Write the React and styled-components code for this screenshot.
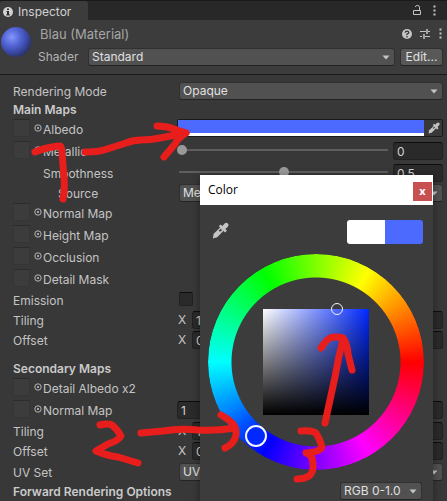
import React from "react";
import styled, { createGlobalStyle, css } from "styled-components";

const GlobalStyle = createGlobalStyle`
  *, *::before, *::after { box-sizing: border-box; }
  body {
    margin: 0;
    background: #383838;
    overflow: hidden;
  }
  body, button, input, select {
    font-family: Inter, "Liberation Sans", sans-serif;
    font-size: 12px;
    line-height: 16px;
    color: #c4c4c4;
  }
`;

const Window = styled.div`
  position: relative;
  min-height: 100vh;
  overflow: hidden;
  background: #383838;
`;

const TabBar = styled.nav`
  display: flex;
  align-items: stretch;
  justify-content: space-between;
  height: 20px;
  background: #282828;
  border-top: 1px solid #1a1a1a;
`;

const Tab = styled.button`
  display: flex;
  align-items: center;
  gap: 5px;
  padding: 2px 17px 0 3px;
  border: 0;
  border-radius: 3px 3px 0 0;
  background: #3c3c3c;
  color: #d2d2d2;
`;

const Tools = styled.div`
  display: flex;
  align-items: center;
  gap: 8px;
  padding-right: 1px;
`;

const TabTools = styled(Tools)`
  gap: 11px;
  padding: 0 11px 1px 0;
`;

const IconButton = styled.button`
  display: flex;
  flex: none;
  align-items: center;
  justify-content: center;
  padding: 0;
  border: 0;
  background: none;
  color: #c4c4c4;
`;

const Header = styled.header`
  display: flex;
  gap: 7px;
  height: 55px;
  background: #3c3c3c;
  border-bottom: 1px solid #1a1a1a;
  padding: 4px 4px 0 1px;
`;

const Preview = styled.div`
  flex: none;
  width: 30px;
  height: 30px;
  margin-top: 3px;
  border-radius: 50%;
  background: radial-gradient(circle at 36% 34%, #8799ff 0, #7083ee 12%, #5062d2 34%, #3a48a2 56%, #252d5c 80%, #20253f 100%);
`;

const HeaderMain = styled.div`
  flex: 1;
  min-width: 0;
`;

const TitleRow = styled.div`
  display: flex;
  align-items: center;
  justify-content: space-between;
  height: 19px;
  padding-left: 2px;
`;

const Title = styled.h1`
  margin: 0;
  font-size: 13px;
  font-weight: 400;
  color: #a6a6a6;
`;

const ShaderRow = styled.div`
  display: flex;
  align-items: center;
  gap: 5px;
  margin-top: 5px;
  height: 18px;
`;

const ShaderLabel = styled.label`
  width: 45px;
  color: #b4b4b4;
`;

const SelectBox = styled.span`
  position: relative;
  display: flex;
  flex: ${(p) => (p.$width ? "none" : 1)};
  width: ${(p) => (p.$width ? `${p.$width}px` : "auto")};
  min-width: 0;
  margin-left: ${(p) => p.$inset || 0}px;
  color: #c4c4c4;

  svg {
    position: absolute;
    right: 5px;
    top: 7px;
    pointer-events: none;
  }
`;

const raised = css`
  height: 18px;
  border: 1px solid #303030;
  border-bottom-color: #242424;
  border-radius: 3px;
  color: #e0e0e0;
`;

const Select = styled.select`
  ${raised}
  appearance: none;
  width: 100%;
  padding: 0 16px 0 3px;
  background: #515151;
`;

const EditButton = styled.button`
  ${raised}
  width: 43px;
  padding: 0;
  background: #585858;
`;

const Body = styled.main`
  padding: 6px 4px 0 13px;
`;

const Row = styled.div`
  display: flex;
  align-items: center;
  height: ${(p) => p.$height || 20}px;
`;

const LabelCell = styled.div`
  display: flex;
  flex: none;
  align-items: center;
  width: 164px;
  padding-left: ${(p) => p.$indent || 0}px;
`;

const Label = styled.label`
  white-space: nowrap;
  padding-top: 1px;
`;

const SectionTitle = styled.h2`
  margin: ${(p) => (p.$spaced ? "10px 0 0" : "0")};
  height: 17px;
  font-size: 12px;
  line-height: 17px;
  font-weight: 600;
  color: #cacaca;
`;

const Slot = styled.button`
  width: 17px;
  height: 18px;
  margin: 0 3px 2px 0;
  padding: 0;
  border: 1px solid #353535;
  border-top-color: #2c2c2c;
  background: #3c3c3c;
`;

const PickerButton = styled(IconButton)`
  width: 10px;
  margin-bottom: 2px;
`;

const Value = styled.div`
  display: flex;
  flex: 1;
  align-items: center;
  min-width: 0;
`;

const TextInput = styled.input`
  flex: ${(p) => (p.$width ? "none" : 1)};
  width: ${(p) => (p.$width ? `${p.$width}px` : "auto")};
  min-width: 0;
  height: 18px;
  padding: 0 3px;
  border: 1px solid #212121;
  border-top-color: #0d0d0d;
  border-radius: 3px;
  background: #2a2a2a;
  color: #d2d2d2;
`;

const Axis = styled.label`
  width: 15px;
  padding-left: 1px;
`;

const Slider = styled.input`
  appearance: none;
  flex: 1;
  min-width: 0;
  height: 10px;
  margin: 0 3px 2px 0;
  background: linear-gradient(#5e5e5e, #5e5e5e) 2px center / calc(100% - 4px) 2px no-repeat;

  &::-webkit-slider-thumb {
    appearance: none;
    width: 10px;
    height: 10px;
    border-radius: 50%;
    background: #999999;
  }
`;

const Checkbox = styled.input`
  appearance: none;
  width: 14px;
  height: 14px;
  margin: 0 0 2px 2px;
  border: 1px solid #212121;
  border-top-color: #0d0d0d;
  border-radius: 2px;
  background: #2a2a2a;
`;

const ColorField = styled.div`
  display: flex;
  flex: 1;
  align-items: center;
  gap: 4px;
  height: 18px;
  margin-bottom: 2px;
  padding-right: 2px;
  border: 1px solid #1a1a1a;
  border-radius: 2px;
`;

const ColorBar = styled.button`
  flex: 1;
  height: 16px;
  padding: 0;
  border: 0;
  border-bottom: 3px solid #ffffff;
  background: #4d6aff;
`;

const Dialog = styled.section`
  position: absolute;
  top: 175px;
  right: 14px;
  width: 233px;
  height: 340px;
  background: #3c3c3c;
  box-shadow: 0 2px 7px 1px rgba(0, 0, 0, 0.32);
`;

const DialogTitle = styled.header`
  display: flex;
  align-items: center;
  justify-content: space-between;
  height: 30px;
  padding: 0 1px 0 8px;
  background: #ffffff;
  color: #000000;
  font-family: "Open Sans", "Noto Sans", sans-serif;
`;

const CloseButton = styled.button`
  width: 19px;
  height: 19px;
  margin-top: 3px;
  padding: 0 0 2px;
  border: 0;
  background: #c75050;
  color: #ffffff;
  font-family: "Open Sans", "Noto Sans", sans-serif;
  font-size: 11px;
  font-weight: 700;
  line-height: 16px;
`;

const PickTools = styled.div`
  display: flex;
  justify-content: space-between;
  align-items: flex-start;
  padding: 15px 10px 0 12px;
`;

const DropperButton = styled(IconButton)`
  padding-top: 2px;
`;

const Swatches = styled.div`
  display: flex;
  width: 76px;
  height: 24px;
  border-radius: 3px;
  overflow: hidden;
`;

const Swatch = styled.button`
  flex: 1;
  padding: 0;
  border: 0;
  background: ${(p) => p.$color};
`;

const Wheel = styled.div`
  position: relative;
  display: grid;
  place-items: center;
  width: 216px;
  height: 216px;
  margin: 10px 0 0 8px;
`;

const HueRing = styled.div`
  grid-area: 1 / 1;
  width: 100%;
  height: 100%;
  border-radius: 50%;
  background: conic-gradient(from 90deg, #ff0000, #ff00ff, #0000ff, #00ffff, #00ff00, #ffff00, #ff0000);
  mask: radial-gradient(circle, transparent 84px, #000 85px);
`;

const Shades = styled.div`
  grid-area: 1 / 1;
  width: 106px;
  height: 106px;
  background:
    linear-gradient(to bottom, rgba(0, 0, 0, 0), #000000),
    linear-gradient(to right, #ffffff, #0028ff);
`;

const Handle = styled.span`
  position: absolute;
  left: ${(p) => p.$x}px;
  top: ${(p) => p.$y}px;
  width: ${(p) => p.$size}px;
  height: ${(p) => p.$size}px;
  transform: translate(-50%, -50%);
  border: ${(p) => p.$line}px solid #f4f4ff;
  border-radius: 50%;
  background: ${(p) => p.$fill || "transparent"};
`;

const ModeRow = styled.div`
  display: flex;
  justify-content: flex-end;
  padding: 12px 11px 0 0;
`;

const Ink = styled.svg`
  position: absolute;
  top: 0;
  left: 0;
  pointer-events: none;
`;

const Arrow = () => (
  <svg width="8" height="5" viewBox="0 0 8 5" aria-hidden="true">
    <path d="M0.5 0.5h7L4 4.5z" fill="currentColor" />
  </svg>
);

const InfoIcon = () => (
  <svg width="10" height="10" viewBox="0 0 10 10" aria-hidden="true">
    <circle cx="5" cy="5" r="5" fill="#d2d2d2" />
    <path d="M4 1.5h2v1.6H4zM3.5 4H6v3.2h.8v1.2H3.3V7.2H4V5.1h-.5z" fill="#303030" />
  </svg>
);

const LockIcon = () => (
  <svg width="10" height="12" viewBox="0 0 10 12" fill="none" stroke="currentColor" aria-hidden="true">
    <path d="M1.5 6.5h7v4h-7zM7.5 6V3.2Q7.5 1.5 5.5 1.5T3.2 3" />
  </svg>
);

const DotsIcon = () => (
  <svg width="3" height="11" viewBox="0 0 3 11" fill="currentColor" aria-hidden="true">
    <path d="M0.5 0.5h2v2h-2zM0.5 4.5h2v2h-2zM0.5 8.5h2v2h-2z" />
  </svg>
);

const HelpIcon = () => (
  <svg width="10" height="10" viewBox="0 0 10 10" aria-hidden="true">
    <circle cx="5" cy="5" r="5" fill="currentColor" />
    <path d="M3.2 3.6Q3.4 2.2 5 2.2t1.8 1.4Q6.8 4.6 5 5v1.2M5 7v1.4" fill="none" stroke="#303030" strokeWidth="1.2" />
  </svg>
);

const PresetIcon = () => (
  <svg width="11" height="10" viewBox="0 0 11 10" fill="none" stroke="currentColor" aria-hidden="true">
    <path d="M0 2.5h6M8 2.5h2M0 7.5h2M5 7.5h5" />
    <path d="M7 0v5M4 5v5" strokeWidth="1.5" />
  </svg>
);

const TargetIcon = () => (
  <svg width="8" height="8" viewBox="0 0 8 8" aria-hidden="true">
    <circle cx="4" cy="4" r="3.2" fill="none" stroke="currentColor" strokeWidth="0.9" />
    <circle cx="4" cy="4" r="1" fill="currentColor" />
  </svg>
);

const Dropper = ({ size }) => (
  <svg width={size} height={size} viewBox="0 0 17 17" aria-hidden="true">
    <path d="M8.4 5.2l3.4 3.4-6.6 6.6-4.4 1.2.9-4.6z" fill="currentColor" />
    <path d="M8.6 6.8l1.5 1.5-2.3 1.4-1-1z" fill="#3c3c3c" />
    <path d="M6.8 4.2l1.8-1.8 1.8 1.5L12.6 1.5q1.7-1.4 3.2 0t0 3.2l-2.4 2.2 1.5 1.8-1.8 1.8z" fill="currentColor" />
  </svg>
);

const Dropdown = ({ id, label, value, width, inset }) => (
  <SelectBox $width={width} $inset={inset}>
    <Select id={id} aria-label={label} defaultValue={value}>
      <option>{value}</option>
    </Select>
    <Arrow />
  </SelectBox>
);

const TextureRow = ({ name, id, children }) => (
  <Row $height={22}>
    <LabelCell>
      <Slot id={`${id}-slot`} aria-label={`${name} texture`} />
      <PickerButton aria-label={`Select ${name}`}>
        <TargetIcon />
      </PickerButton>
      <Label htmlFor={children ? id : `${id}-slot`}>{name}</Label>
    </LabelCell>
    <Value>{children}</Value>
  </Row>
);

const Field = ({ name, id, indent, height, children }) => (
  <Row $height={height}>
    <LabelCell $indent={indent}>
      <Label htmlFor={id}>{name}</Label>
    </LabelCell>
    <Value>{children}</Value>
  </Row>
);

const SliderValue = ({ id, name, value }) => (
  <>
    <Slider id={id} type="range" min="0" max="1" step="0.01" defaultValue={value} />
    <TextInput $width={50} aria-label={`${name} value`} defaultValue={value} />
  </>
);

const VectorField = ({ name, id, value }) => (
  <Field name={name} id={`${id}-x`}>
    <Axis htmlFor={`${id}-x`}>X</Axis>
    <TextInput id={`${id}-x`} defaultValue={value} />
    <Axis htmlFor={`${id}-y`}>Y</Axis>
    <TextInput id={`${id}-y`} defaultValue={value} />
  </Field>
);

const ColorDialog = () => (
  <Dialog role="dialog" aria-label="Color">
    <DialogTitle>
      <span>Color</span>
      <CloseButton aria-label="Close">x</CloseButton>
    </DialogTitle>
    <PickTools>
      <DropperButton aria-label="Pick a color">
        <Dropper size={17} />
      </DropperButton>
      <Swatches>
        <Swatch $color="#ffffff" aria-label="Original color" />
        <Swatch $color="#4d6aff" aria-label="New color" />
      </Swatches>
    </PickTools>
    <Wheel>
      <HueRing />
      <Shades />
      <Handle $x={48} $y={182} $size={22} $line={2} $fill="#0028ff" />
      <Handle $x={129} $y={55} $size={12} $line={1} />
    </Wheel>
    <ModeRow>
      <Dropdown label="Color mode" value="RGB 0-1.0" width={82} />
    </ModeRow>
  </Dialog>
);

const Annotations = () => (
  <Ink width="447" height="501" viewBox="0 0 447 501" aria-hidden="true">
    <g fill="none" stroke="#e81e1c" strokeWidth="7" strokeLinecap="round" strokeLinejoin="round">
      <path d="M35 152Q45 148 52 147T60 146Q62 147 62 153L64 177Q65 189 63 199" />
      <path d="M85 152Q98 152 104 150L126 143Q133 140 141 140Q151 140 160 138L186 133" />
      <path d="M157 126Q166 126 174 129L186 133Q178 138 175 144L164 157" />
      <path d="M100 425Q108 423 112 425Q117 429 121 436Q118 441 108 444L96 451Q108 456 118 457L138 463" />
      <path d="M141 433L163 431Q180 428 198 430Q216 431 235 428" />
      <path d="M221 415Q230 420 233 424Q237 429 236 435Q234 444 225 448" />
      <path d="M301 431Q312 430 316 433Q320 439 322 447Q320 452 306 453Q313 455 313 464Q314 472 309 476Q304 479 297 479" />
      <path d="M325 423L335 377Q338 359 343 339" />
      <path d="M321 348Q327 339 330 338Q335 336 343 338Q347 342 348 354L352 370" />
    </g>
  </Ink>
);

export default function App() {
  return (
    <Window>
      <GlobalStyle />
      <TabBar>
        <Tab>
          <InfoIcon />
          Inspector
        </Tab>
        <TabTools>
          <IconButton aria-label="Lock"><LockIcon /></IconButton>
          <IconButton aria-label="Tab menu"><DotsIcon /></IconButton>
        </TabTools>
      </TabBar>
      <Header>
        <Preview />
        <HeaderMain>
          <TitleRow>
            <Title>Blau (Material)</Title>
            <Tools>
              <IconButton aria-label="Help"><HelpIcon /></IconButton>
              <IconButton aria-label="Presets"><PresetIcon /></IconButton>
              <IconButton aria-label="Material menu"><DotsIcon /></IconButton>
            </Tools>
          </TitleRow>
          <ShaderRow>
            <ShaderLabel htmlFor="shader">Shader</ShaderLabel>
            <Dropdown id="shader" value="Standard" />
            <EditButton>Edit...</EditButton>
          </ShaderRow>
        </HeaderMain>
      </Header>
      <Body>
        <Field name="Rendering Mode" id="mode">
          <Dropdown id="mode" value="Opaque" inset={2} />
        </Field>
        <SectionTitle>Main Maps</SectionTitle>
        <TextureRow name="Albedo" id="albedo">
          <ColorField>
            <ColorBar id="albedo" />
            <IconButton aria-label="Pick albedo"><Dropper size={12} /></IconButton>
          </ColorField>
        </TextureRow>
        <TextureRow name="Metallic" id="metallic">
          <SliderValue id="metallic" name="Metallic" value="0" />
        </TextureRow>
        <Field name="Smoothness" id="smoothness" indent={30} height={22}>
          <SliderValue id="smoothness" name="Smoothness" value="0.5" />
        </Field>
        <Field name="Source" id="source" indent={45} height={18}>
          <Dropdown id="source" value="Metallic Alpha" inset={2} />
        </Field>
        <TextureRow name="Normal Map" id="normal" />
        <TextureRow name="Height Map" id="height" />
        <TextureRow name="Occlusion" id="occlusion" />
        <TextureRow name="Detail Mask" id="mask" />
        <Field name="Emission" id="emission">
          <Checkbox id="emission" type="checkbox" />
        </Field>
        <VectorField name="Tiling" id="tiling" value="1" />
        <VectorField name="Offset" id="offset" value="0" />
        <SectionTitle $spaced>Secondary Maps</SectionTitle>
        <TextureRow name="Detail Albedo x2" id="detail-albedo" />
        <TextureRow name="Normal Map" id="detail-normal">
          <TextInput id="detail-normal" defaultValue="1" />
        </TextureRow>
        <VectorField name="Tiling" id="detail-tiling" value="1" />
        <VectorField name="Offset" id="detail-offset" value="0" />
        <Field name="UV Set" id="uv" height={22}>
          <Dropdown id="uv" value="UV0" inset={2} />
        </Field>
        <SectionTitle>Forward Rendering Options</SectionTitle>
      </Body>
      <ColorDialog />
      <Annotations />
    </Window>
  );
}
